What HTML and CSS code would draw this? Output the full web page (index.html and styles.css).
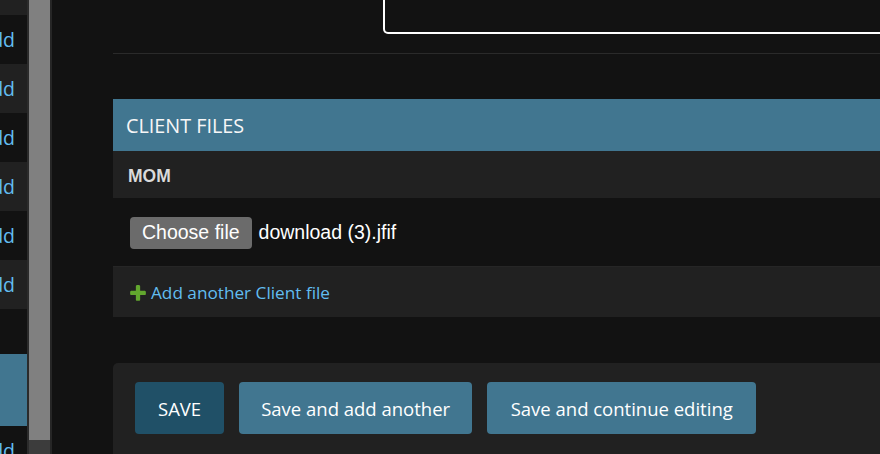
FILE: index.html
```html
<!DOCTYPE html>
<html lang="en">
<head>
<meta charset="utf-8">
<title>Client files</title>
<link rel="stylesheet" href="styles.css">
</head>
<body>
<div class="layout">
  <nav class="sidebar">
    <div class="nav-row alt first"></div>
    <div class="nav-row"><a class="nav-add" href="#">Add</a></div>
    <div class="nav-row alt"><a class="nav-add" href="#">Add</a></div>
    <div class="nav-row"><a class="nav-add" href="#">Add</a></div>
    <div class="nav-row alt"><a class="nav-add" href="#">Add</a></div>
    <div class="nav-row"><a class="nav-add" href="#">Add</a></div>
    <div class="nav-row alt"><a class="nav-add" href="#">Add</a></div>
    <div class="nav-gap"></div>
    <div class="nav-caption"></div>
    <div class="nav-row"><a class="nav-add" href="#">Add</a></div>
  </nav>
  <div class="scrollbar"><div class="thumb"></div></div>
  <main class="main">
    <div class="form-row">
      <div class="textbox"></div>
    </div>

    <section class="module">
      <h2 class="module-title">CLIENT FILES</h2>
      <div class="col-head">MOM</div>
      <div class="file-row">
        <span class="file-button">Choose file</span>
        <span class="file-name">download (3).jfif</span>
      </div>
      <div class="add-row">
        <a class="add-link" href="#">
          <svg class="plus" viewBox="0 0 1792 1792" width="20" height="20" aria-hidden="true"><path d="M1600 796v192q0 40-28 68t-68 28h-416v416q0 40-28 68t-68 28h-192q-40 0-68-28t-28-68v-416h-416q-40 0-68-28t-28-68v-192q0-40 28-68t68-28h416v-416q0-40 28-68t68-28h192q40 0 68 28t28 68v416h416q40 0 68 28t28 68z"/></svg>
          <span>Add another Client file</span>
        </a>
      </div>
    </section>

    <div class="submit-row">
      <button class="btn btn-default" type="button">SAVE</button>
      <button class="btn" type="button">Save and add another</button>
      <button class="btn btn-wide" type="button">Save and continue editing</button>
    </div>
  </main>
</div>
</body>
</html>
```

FILE: styles.css
```css
html, body {
  margin: 0;
  padding: 0;
}

body {
  background: #121212;
  color: #eeeeee;
  font-family: "Open Sans", "Noto Sans", sans-serif;
  width: 880px;
  height: 454px;
  overflow: hidden;
}

a {
  text-decoration: none;
}

.layout {
  display: flex;
  height: 454px;
}

/* ---------- sidebar ---------- */
.sidebar {
  flex: 0 0 27px;
  width: 27px;
  overflow: hidden;
  display: flex;
  flex-direction: column;
  background: #121212;
}

.nav-row {
  flex: 0 0 49px;
  height: 49px;
  display: flex;
  align-items: center;
  justify-content: flex-end;
  padding-right: 12px;
  overflow: hidden;
  background: #121212;
  box-sizing: border-box;
}

.nav-row.alt {
  background: #212121;
}

.nav-row.first {
  flex-basis: 15px;
  height: 15px;
}

.nav-add {
  color: #62bdf0;
  font-size: 19.5px;
  line-height: 24px;
  white-space: nowrap;
}

.nav-gap {
  flex: 0 0 45px;
}

.nav-caption {
  flex: 0 0 72px;
  background: #417690;
}

/* ---------- scrollbar ---------- */
.scrollbar {
  flex: 0 0 25px;
  background: #3c3c3c;
  box-shadow: inset 2px 0 0 #2b2b2b, inset -2px 0 0 #262626;
}

.thumb {
  margin: 0 2px;
  height: 440px;
  background: #808080;
}

/* ---------- main ---------- */
.main {
  flex: 1;
  padding-left: 61px;
  overflow: hidden;
  display: flex;
  flex-direction: column;
}

.form-row {
  flex: 0 0 53px;
  border-bottom: 1px solid #2a2a2a;
}

.textbox {
  margin-left: 270px;
  margin-right: -20px;
  height: 32px;
  border: 2px solid #ffffff;
  border-top: 0;
  border-radius: 0 0 0 5px;
}

.module {
  margin-top: 45px;
}

.module-title {
  margin: 0;
  height: 52px;
  padding-left: 13px;
  display: flex;
  align-items: center;
  background: #417690;
  color: #f7f7f7;
  font-weight: 400;
  font-size: 19.8px;
}

.col-head {
  height: 47px;
  padding-left: 15px;
  padding-top: 3px;
  box-sizing: border-box;
  display: flex;
  align-items: center;
  background: #212121;
  color: #dadada;
  font-family: "Liberation Sans", Arial, sans-serif;
  font-weight: 700;
  font-size: 17.5px;
}

.file-row {
  height: 68px;
  padding-left: 17px;
  display: flex;
  align-items: center;
  gap: 7px;
  font-family: "Liberation Sans", Arial, sans-serif;
  font-size: 19.5px;
  color: #ffffff;
}

.file-button {
  height: 32px;
  padding: 0 12px;
  display: flex;
  align-items: center;
  background: #6b6b6b;
  border-radius: 4px;
  box-sizing: border-box;
  margin-top: 1px;
}

.add-row {
  height: 51px;
  padding-left: 15px;
  display: flex;
  align-items: center;
  background: #212121;
  border-top: 1px solid #262626;
  box-sizing: border-box;
}

.add-link {
  display: flex;
  align-items: center;
  gap: 3px;
  color: #62bdf0;
  font-size: 17.2px;
}

.plus {
  fill: #62a72e;
  flex: none;
  margin-top: 1px;
}

/* ---------- submit row ---------- */
.submit-row {
  margin-top: 46px;
  padding: 19px 22px 30px;
  display: flex;
  gap: 15px;
  background: #212121;
  border-radius: 5px 0 0 0;
}

.btn {
  height: 52px;
  padding: 0 22px;
  border: 0;
  border-radius: 4px;
  background: #417690;
  color: #ffffff;
  font-family: "Open Sans", "Noto Sans", sans-serif;
  font-size: 18.5px;
  cursor: pointer;
}

.btn-wide {
  padding: 0 23.5px;
}

.btn-default {
  background: #205067;
  padding: 0 23px;
}
```
